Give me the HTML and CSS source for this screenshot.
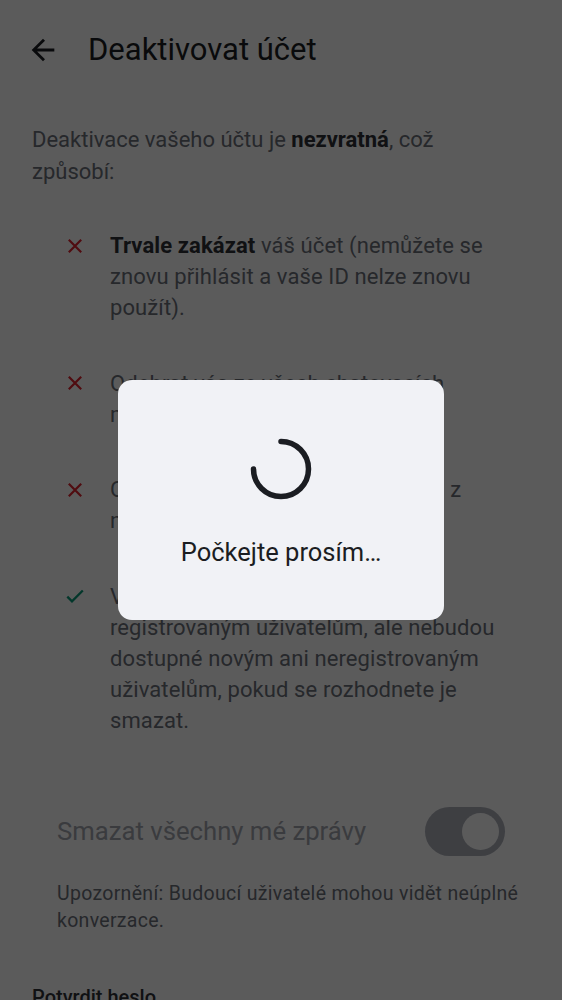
FILE: index.html
```html
<!DOCTYPE html>
<html lang="cs">
<head>
<meta charset="utf-8">
<title>Deaktivovat účet</title>
<link rel="stylesheet" href="styles.css">
</head>
<body>
<div class="page">
  <header class="topbar">
    <svg class="back" viewBox="0 0 24 24" aria-hidden="true"><path d="M20 11H7.83l5.59-5.59L12 4l-8 8 8 8 1.41-1.41L7.83 13H20v-2z"/></svg>
    <h1 class="title">Deaktivovat účet</h1>
  </header>
  <main class="content">
    <p class="intro">Deaktivace vašeho účtu je <b>nezvratná</b>, což způsobí:</p>
    <ul class="list">
      <li class="item">
        <svg class="ic ic-x" viewBox="0 0 24 24" aria-hidden="true"><path d="M5.8 5.8L18.2 18.2M18.2 5.8L5.8 18.2"/></svg>
        <span><b>Trvale zakázat</b> váš účet (nemůžete se znovu přihlásit a vaše ID nelze znovu použít).</span>
      </li>
      <li class="item">
        <svg class="ic ic-x" viewBox="0 0 24 24" aria-hidden="true"><path d="M5.8 5.8L18.2 18.2M18.2 5.8L5.8 18.2"/></svg>
        <span>Odebrat vás ze všech chatovacích místností.</span>
      </li>
      <li class="item">
        <svg class="ic ic-x" viewBox="0 0 24 24" aria-hidden="true"><path d="M5.8 5.8L18.2 18.2M18.2 5.8L5.8 18.2"/></svg>
        <span>Odstranit informace o vašem účtu z našeho serveru identit.</span>
      </li>
      <li class="item">
        <svg class="ic ic-check" viewBox="0 0 24 24" aria-hidden="true"><path d="M4.3 12.6L9 17.3L19.8 6.5"/></svg>
        <span>Vaše zprávy budou stále viditelné registrovaným uživatelům, ale nebudou dostupné novým ani neregistrovaným uživatelům, pokud se rozhodnete je smazat.</span>
      </li>
    </ul>
    <div class="toggle-row">
      <span class="toggle-label">Smazat všechny mé zprávy</span>
      <span class="switch"><span class="thumb"></span></span>
    </div>
    <p class="warning">Upozornění: Budoucí uživatelé mohou vidět neúplné konverzace.</p>
    <label class="field-label">Potvrdit heslo</label>
    <div class="field"></div>
  </main>
</div>
<div class="scrim">
  <div class="dialog">
    <svg class="spinner" viewBox="0 0 62 62" aria-hidden="true"><path d="M31 3.5A27.5 27.5 0 1 1 3.5 31"/></svg>
    <p class="dialog-text">Počkejte prosím…</p>
  </div>
</div>
</body>
</html>
```
FILE: styles.css
```css
html, body {
  margin: 0;
  padding: 0;
  background: #ffffff;
  font-family: Roboto, "Noto Sans", "Liberation Sans", sans-serif;
  overflow: hidden;
}
.page {
  width: 562px;
}
.topbar {
  display: flex;
  align-items: center;
  height: 100px;
  padding-left: 26px;
  gap: 28px;
}
.back {
  width: 34px;
  height: 34px;
  fill: #1b1d22;
  flex: none;
}
.title {
  margin: 0;
  font-size: 31px;
  font-weight: 400;
  color: #1b1d22;
  line-height: 40px;
}
.content {
  padding: 0 32px;
}
.intro {
  margin: 24px 0 0;
  padding-right: 14px;
  font-size: 22px;
  line-height: 32px;
  color: #6c707a;
}
.intro b, .item b {
  color: #2f3137;
  font-weight: 700;
}
.list {
  list-style: none;
  margin: 42px 0 0;
  padding: 0 14px 0 0;
  display: flex;
  flex-direction: column;
  gap: 44.5px;
}
.item {
  display: flex;
  align-items: flex-start;
  gap: 23px;
  padding-left: 31px;
  font-size: 22px;
  line-height: 31px;
  letter-spacing: 0.1px;
  color: #6c707a;
}
.ic {
  width: 24px;
  height: 24px;
  flex: none;
  margin-top: 3.5px;
  fill: none;
  stroke-width: 2.2;
}
.ic-x { stroke: #e0232f; }
.ic-check { stroke: #0a9a78; stroke-width: 2.3; }
.toggle-row {
  margin-top: 71.5px;
  height: 48px;
  padding: 0 25px;
  display: flex;
  align-items: center;
  justify-content: space-between;
}
.toggle-label {
  font-size: 25.7px;
  color: #a3a6af;
}
.switch {
  width: 80px;
  height: 49px;
  border-radius: 25px;
  background: #adb0ba;
  display: flex;
  align-items: center;
  justify-content: flex-end;
  padding-right: 6px;
  box-sizing: border-box;
}
.thumb {
  width: 37px;
  height: 37px;
  border-radius: 50%;
  background: #ffffff;
}
.warning {
  margin: 24.5px 0 0;
  padding: 0 0 0 25px;
  font-size: 19.5px;
  line-height: 27px;
  letter-spacing: 0.3px;
  color: #6c707a;
}
.field-label {
  display: block;
  margin-top: 50.5px;
  font-size: 20px;
  line-height: 27px;
  font-weight: 500;
  color: #2f3137;
}
.field {
  height: 60px;
  margin-top: 8px;
  border: 1px solid #9a9ea6;
  border-radius: 8px;
}
.scrim {
  position: fixed;
  inset: 0;
  background: rgba(0, 0, 0, 0.643);
  display: flex;
  align-items: center;
  justify-content: center;
}
.dialog {
  width: 326px;
  height: 240px;
  box-sizing: border-box;
  background: #f1f2f6;
  border-radius: 14px;
  padding: 58px 0 0;
  display: flex;
  flex-direction: column;
  align-items: center;
  gap: 36px;
}
.spinner {
  width: 62px;
  height: 62px;
  fill: none;
  stroke: #1b1d22;
  stroke-width: 5.5;
  stroke-linecap: round;
}
.dialog-text {
  margin: 0;
  font-size: 25.5px;
  line-height: 32px;
  color: #1b1d22;
}
```
